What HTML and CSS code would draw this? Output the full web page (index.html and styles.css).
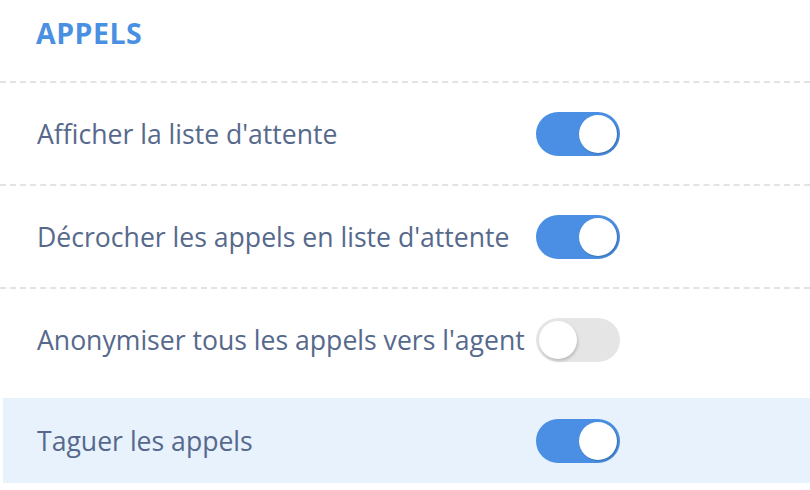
FILE: index.html
```
<!DOCTYPE html>
<html lang="fr">

<head>
    <meta charset="UTF-8">
    <meta name="viewport" content="width=device-width, initial-scale=1.0">
    <title>Appels</title>
    <link rel="stylesheet" href="styles.css">
</head>

<body>

    <section class="settings">
        <h2 class="settings-title">APPELS</h2>

        <ul class="settings-list">
            <li class="setting">
                <span class="setting-label">Afficher la liste d'attente</span>
                <span class="toggle on"><span class="knob"></span></span>
            </li>
            <li class="setting">
                <span class="setting-label">Décrocher les appels en liste d'attente</span>
                <span class="toggle on"><span class="knob"></span></span>
            </li>
            <li class="setting">
                <span class="setting-label">Anonymiser tous les appels vers l'agent</span>
                <span class="toggle"><span class="knob"></span></span>
            </li>
            <li class="setting active">
                <span class="setting-label">Taguer les appels</span>
                <span class="toggle on"><span class="knob"></span></span>
            </li>
        </ul>
    </section>

</body>

</html>
```

FILE: styles.css
```
body {
    font-family: 'Open Sans', 'Noto Sans', sans-serif;
    background-color: #fff;
    margin: 0;
    padding: 0;
}

.settings {
    width: 810px;
}

.settings-title {
    margin: 0;
    padding: 14px 0 0 36px;
    height: 67px;
    font-size: 28.5px;
    font-weight: 700;
    color: #4a90e2;
    letter-spacing: 0.5px;
}

.settings-list {
    list-style: none;
    margin: 0;
    padding: 0;
}

.setting {
    display: grid;
    grid-template-columns: 499px 84px;
    align-items: center;
    height: 101px;
    padding-left: 37px;
    border-top: 2px dashed #e3e3e3;
    font-size: 26.6px;
    color: #56698c;
}

.setting.active {
    height: 85px;
    margin: 8px 0 0 3px;
    padding-left: 34px;
    border-top: none;
    background-color: #e8f2fc;
}

.toggle {
    display: flex;
    align-items: center;
    width: 84px;
    height: 44px;
    padding: 0 3px;
    box-sizing: border-box;
    border-radius: 22px;
    background-color: #e5e5e5;
}

.toggle.on {
    justify-content: flex-end;
    background-color: #4a8fe3;
}

.knob {
    width: 38px;
    height: 38px;
    border-radius: 50%;
    background-color: #fff;
    box-shadow: 1px 2px 3px rgba(0, 0, 0, 0.18);
}

.toggle.on .knob {
    box-shadow: 1px 1px 2px rgba(0, 0, 0, 0.25);
}
```
